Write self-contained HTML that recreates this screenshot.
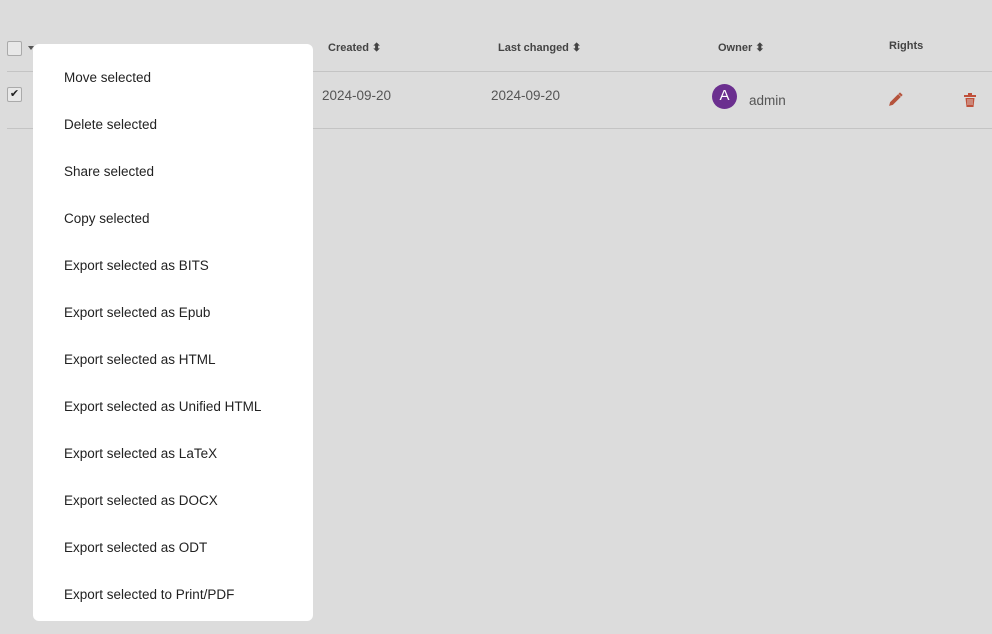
<!DOCTYPE html>
<html><head><style>
body{margin:0;width:992px;height:634px;background:#dcdcdc;font-family:"Liberation Sans",sans-serif;position:relative;overflow:hidden;color:#444}
.a{position:absolute}
.th{font-size:11px;font-weight:bold;color:#444;top:41px}
.td{font-size:13.5px;color:#555;}
.line{position:absolute;left:7px;right:0;height:1px;background:#c4c4c4}
.cb{position:absolute;width:13px;height:13px;border:1px solid #aaa;border-radius:2px;background:#e8e8e8}
.menu{position:absolute;left:33px;top:44px;width:280px;height:577px;background:#fff;border-radius:6px}
.menu div{position:absolute;left:31px;font-size:13.5px;color:#222}
</style></head><body>
<div class="cb" style="left:7px;top:41px"></div>
<div class="a" style="left:28px;top:46px;border:3.5px solid transparent;border-top:4px solid #555;border-bottom:0"></div>
<div class="a th" style="left:328px">Created ⬍</div>
<div class="a th" style="left:498px">Last changed ⬍</div>
<div class="a th" style="left:718px">Owner ⬍</div>
<div class="a th" style="left:889px;top:40px">Rights</div>
<div class="line" style="top:71px"></div>
<div class="line" style="top:128px"></div>
<div class="cb" style="left:7px;top:87px;font-size:11px;line-height:13px;text-align:center;color:#222">✔</div>
<div class="a td" style="left:322px;top:88px">2024-09-20</div>
<div class="a td" style="left:491px;top:88px">2024-09-20</div>
<div class="a" style="left:712px;top:84px;width:25px;height:25px;border-radius:50%;background:#6b2f8f;color:#fff;font-size:15px;text-align:center;line-height:24px">A</div>
<div class="a td" style="left:749px;top:93px">admin</div>
<svg class="a" style="left:888px;top:92px" width="15" height="15" viewBox="0 0 14 14"><path d="M1 13l1-3.5 7.5-7.5 2.5 2.5-7.5 7.5z" fill="#b5533c"/><path d="M10.5 1l2.5 2.5" stroke="#b5533c" stroke-width="2"/></svg>
<svg class="a" style="left:964px;top:93px" width="12" height="14" viewBox="0 0 12 14"><rect x="0" y="2" width="12" height="2" fill="#c0503a"/><rect x="4" y="0" width="4" height="2" fill="#c0503a"/><path d="M1.5 5h9l-1 9h-7z" fill="#c0503a"/><path d="M4 6v6M6 6v6M8 6v6" stroke="#dcdcdc" stroke-width=".8"/></svg>
<div class="menu">
<div style="top:26px">Move selected</div>
<div style="top:73px">Delete selected</div>
<div style="top:120px">Share selected</div>
<div style="top:167px">Copy selected</div>
<div style="top:214px">Export selected as BITS</div>
<div style="top:261px">Export selected as Epub</div>
<div style="top:308px">Export selected as HTML</div>
<div style="top:355px">Export selected as Unified HTML</div>
<div style="top:402px">Export selected as LaTeX</div>
<div style="top:449px">Export selected as DOCX</div>
<div style="top:496px">Export selected as ODT</div>
<div style="top:543px">Export selected to Print/PDF</div>
</div>
</body></html>
